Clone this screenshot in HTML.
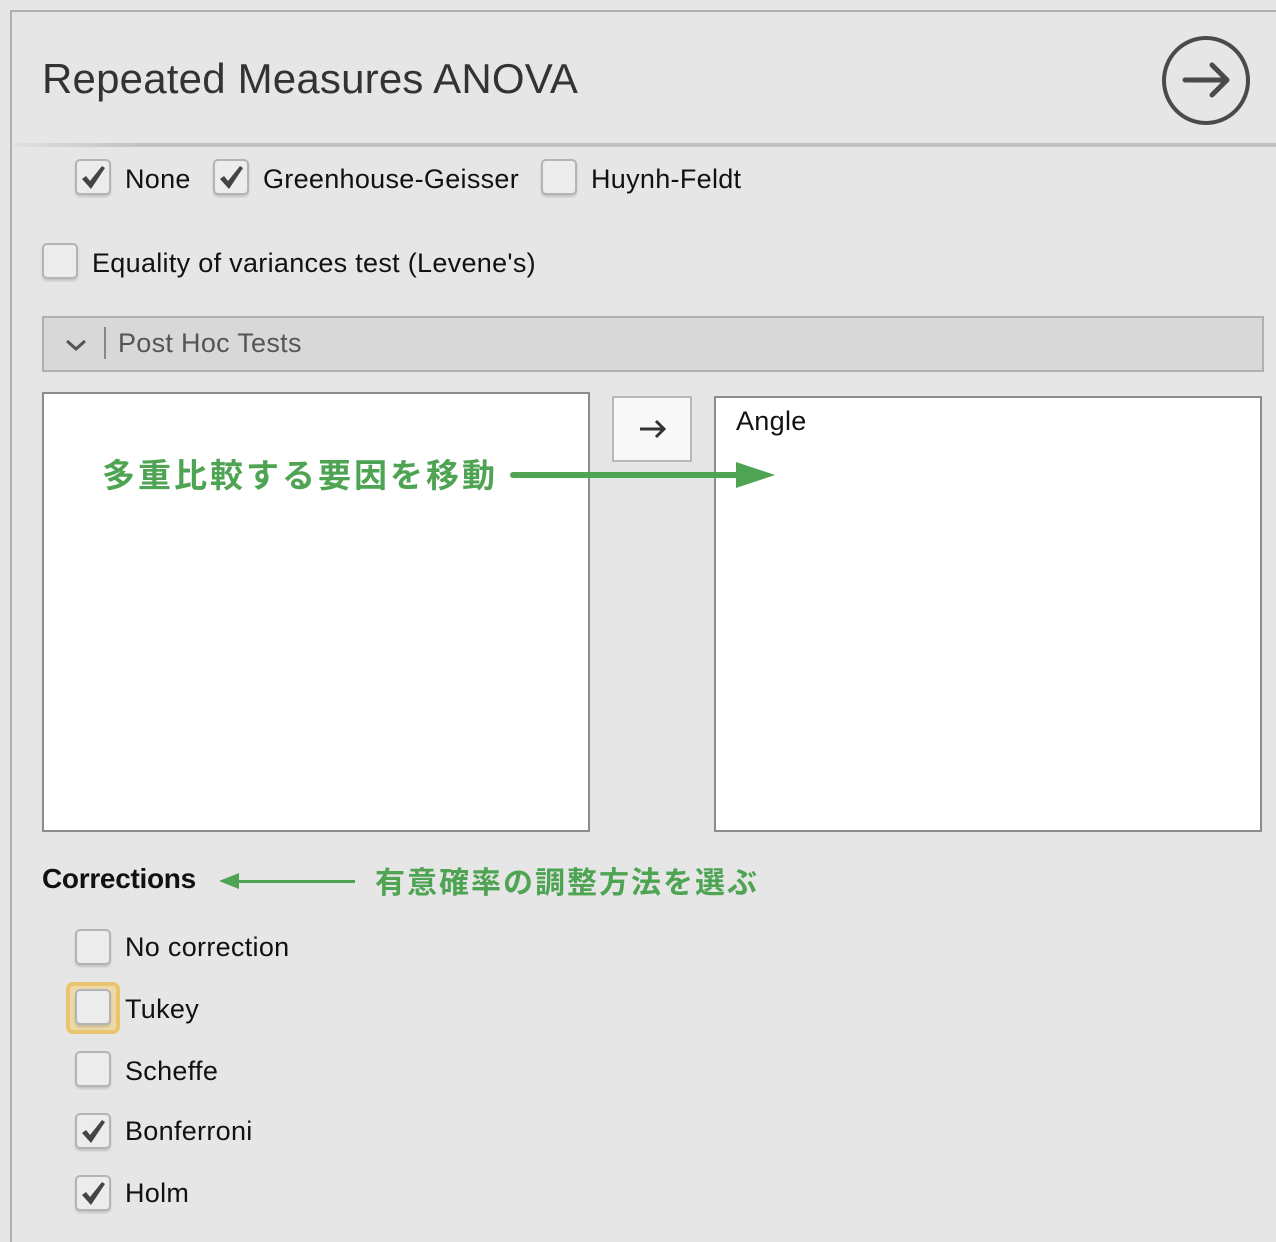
<!DOCTYPE html>
<html><head><meta charset="utf-8">
<style>
*{margin:0;padding:0;box-sizing:border-box}
html,body{width:1276px;height:1242px;overflow:hidden;background:#e6e6e6;font-family:"Liberation Sans","Noto Sans CJK JP",sans-serif;color:#111}
.frame{position:absolute;left:10px;top:10px;width:1266px;height:1232px;border-left:2px solid #b0b0b0;border-top:2px solid #b0b0b0}
.abs{position:absolute}
.title{left:42px;top:55px;font-size:42px;color:#333;white-space:nowrap;letter-spacing:0.2px}
.div{left:14px;top:143px;width:1262px;height:4px;background:linear-gradient(to right,#e0e0e0,#c2c2c2 10%,#c2c2c2)}
.cb{position:absolute;width:36px;height:36px;border:2px solid #b4b4b4;border-radius:5px;background:#ececec;box-shadow:0 2px 2px rgba(0,0,0,.15)}
.cb svg{position:absolute;left:3px;top:3px}
.lbl{position:absolute;font-size:27px;white-space:nowrap;color:#111;letter-spacing:0.3px}
.bar{left:42px;top:316px;width:1222px;height:56px;background:#d8d8d8;border:2px solid #b0b0b0}
.box{background:#fff;border:2px solid #8c8c8c}
.green{color:#4ea453;font-weight:bold;white-space:nowrap}
</style></head><body>
<div class="frame"></div>
<div class="abs title">Repeated Measures ANOVA</div>
<svg class="abs" style="left:1160px;top:35px" width="92" height="92" viewBox="0 0 92 92">
<ellipse cx="46" cy="45.5" rx="42" ry="42.5" fill="none" stroke="#4a4a4a" stroke-width="4"/>
<path d="M25 45 H66 M52 30 L67 45 L52 60" fill="none" stroke="#4a4a4a" stroke-width="5" stroke-linecap="round" stroke-linejoin="round"/>
</svg>
<div class="abs div"></div>

<div class="cb" style="left:75px;top:159px"><svg width="28" height="28" viewBox="0 0 28 28"><path d="M2 15 L6 12 L10 17 L22 2 L25 4 L11 25 Z" fill="#444"/></svg></div>
<div class="lbl" style="left:125px;top:164px">None</div>
<div class="cb" style="left:213px;top:159px"><svg width="28" height="28" viewBox="0 0 28 28"><path d="M2 15 L6 12 L10 17 L22 2 L25 4 L11 25 Z" fill="#444"/></svg></div>
<div class="lbl" style="left:263px;top:164px">Greenhouse-Geisser</div>
<div class="cb" style="left:541px;top:159px"></div>
<div class="lbl" style="left:591px;top:164px">Huynh-Feldt</div>

<div class="cb" style="left:42px;top:243px"></div>
<div class="lbl" style="left:92px;top:248px">Equality of variances test (Levene's)</div>

<div class="abs bar"></div>
<svg class="abs" style="left:64px;top:336px" width="24" height="18" viewBox="0 0 24 18"><path d="M3 5 L12 13 L21 5" fill="none" stroke="#555" stroke-width="3"/></svg>
<div class="abs" style="left:104px;top:327px;width:2px;height:32px;background:#888"></div>
<div class="lbl" style="left:118px;top:328px;color:#555">Post Hoc Tests</div>

<div class="abs box" style="left:42px;top:392px;width:548px;height:440px"></div>
<div class="abs" style="left:612px;top:396px;width:80px;height:66px;background:#f8f8f8;border:2px solid #b8b8b8"></div>
<svg class="abs" style="left:638px;top:418px" width="30" height="22" viewBox="0 0 30 22"><path d="M2 11 H26 M18 3 L26 11 L18 19" fill="none" stroke="#333" stroke-width="3"/></svg>
<div class="abs box" style="left:714px;top:396px;width:548px;height:436px"></div>
<div class="lbl" style="left:736px;top:406px">Angle</div>

<div class="abs green" style="left:102px;top:449px;font-size:33px;letter-spacing:3px">多重比較する要因を移動</div>
<div class="abs" style="left:510px;top:472px;width:232px;height:6px;background:#4ea453;border-radius:3px"></div>
<div class="abs" style="left:736px;top:462px;width:0;height:0;border-top:13px solid transparent;border-bottom:13px solid transparent;border-left:39px solid #4ea453"></div>

<div class="lbl" style="left:42px;top:863px;font-weight:bold;letter-spacing:-0.3px;font-size:28px">Corrections</div>
<div class="abs" style="left:234px;top:880px;width:121px;height:3px;background:#4ea453"></div>
<div class="abs" style="left:219px;top:873px;width:0;height:0;border-top:8px solid transparent;border-bottom:8px solid transparent;border-right:20px solid #4ea453"></div>
<div class="abs green" style="left:375px;top:858px;font-size:30px;letter-spacing:2px">有意確率の調整方法を選ぶ</div>

<div class="cb" style="left:75px;top:929px"></div>
<div class="lbl" style="left:125px;top:932px">No correction</div>
<div class="abs" style="left:66px;top:982px;width:54px;height:52px;border:4px solid #eac46f;border-radius:7px;background:#ecd9a8"></div>
<div class="cb" style="left:75px;top:989px;background:#ececec"></div>
<div class="lbl" style="left:125px;top:994px">Tukey</div>
<div class="cb" style="left:75px;top:1051px"></div>
<div class="lbl" style="left:125px;top:1056px">Scheffe</div>
<div class="cb" style="left:75px;top:1113px"><svg width="28" height="28" viewBox="0 0 28 28"><path d="M2 15 L6 12 L10 17 L22 2 L25 4 L11 25 Z" fill="#444"/></svg></div>
<div class="lbl" style="left:125px;top:1116px">Bonferroni</div>
<div class="cb" style="left:75px;top:1175px"><svg width="28" height="28" viewBox="0 0 28 28"><path d="M2 15 L6 12 L10 17 L22 2 L25 4 L11 25 Z" fill="#444"/></svg></div>
<div class="lbl" style="left:125px;top:1178px">Holm</div>
</body></html>
